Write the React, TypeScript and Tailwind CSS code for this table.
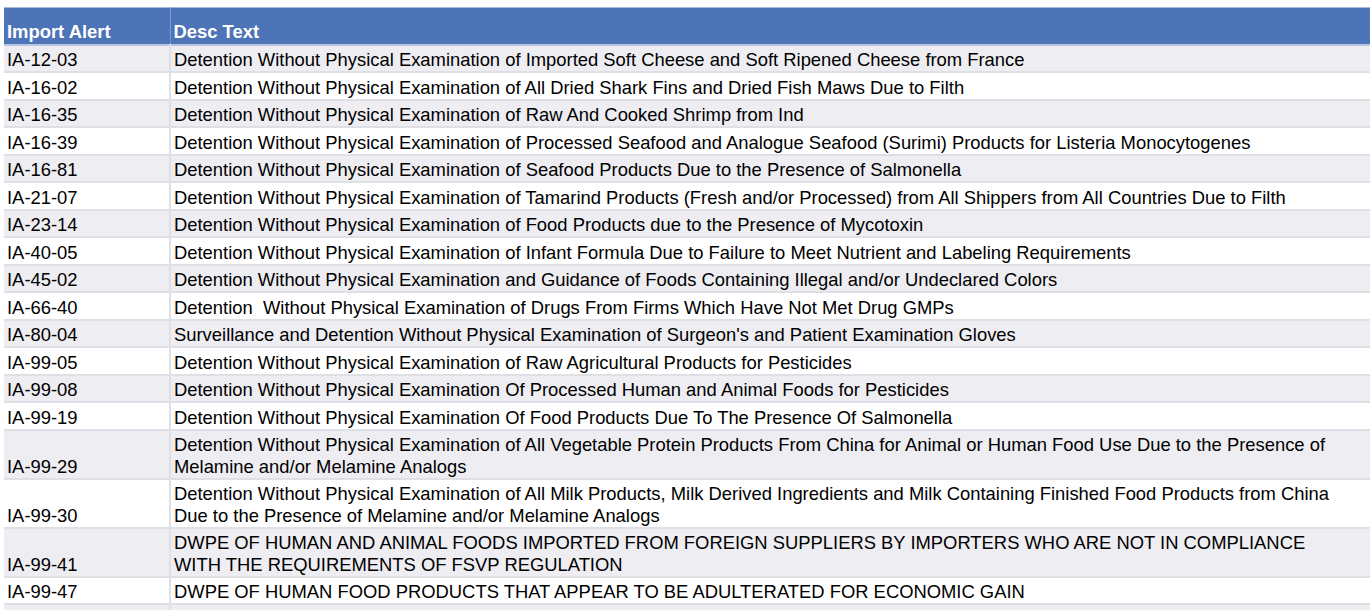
const rows: { id: string; lines: string[] }[] = [
  { id: "IA-12-03", lines: ["Detention Without Physical Examination of Imported Soft Cheese and Soft Ripened Cheese from France"] },
  { id: "IA-16-02", lines: ["Detention Without Physical Examination of All Dried Shark Fins and Dried Fish Maws Due to Filth"] },
  { id: "IA-16-35", lines: ["Detention Without Physical Examination of Raw And Cooked Shrimp from Ind"] },
  { id: "IA-16-39", lines: ["Detention Without Physical Examination of Processed Seafood and Analogue Seafood (Surimi) Products for Listeria Monocytogenes"] },
  { id: "IA-16-81", lines: ["Detention Without Physical Examination of Seafood Products Due to the Presence of Salmonella"] },
  { id: "IA-21-07", lines: ["Detention Without Physical Examination of Tamarind Products (Fresh and/or Processed) from All Shippers from All Countries Due to Filth"] },
  { id: "IA-23-14", lines: ["Detention Without Physical Examination of Food Products due to the Presence of Mycotoxin"] },
  { id: "IA-40-05", lines: ["Detention Without Physical Examination of Infant Formula Due to Failure to Meet Nutrient and Labeling Requirements"] },
  { id: "IA-45-02", lines: ["Detention Without Physical Examination and Guidance of Foods Containing Illegal and/or Undeclared Colors"] },
  { id: "IA-66-40", lines: ["Detention  Without Physical Examination of Drugs From Firms Which Have Not Met Drug GMPs"] },
  { id: "IA-80-04", lines: ["Surveillance and Detention Without Physical Examination of Surgeon's and Patient Examination Gloves"] },
  { id: "IA-99-05", lines: ["Detention Without Physical Examination of Raw Agricultural Products for Pesticides"] },
  { id: "IA-99-08", lines: ["Detention Without Physical Examination Of Processed Human and Animal Foods for Pesticides"] },
  { id: "IA-99-19", lines: ["Detention Without Physical Examination Of Food Products Due To The Presence Of Salmonella"] },
  {
    id: "IA-99-29",
    lines: [
      "Detention Without Physical Examination of All Vegetable Protein Products From China for Animal or Human Food Use Due to the Presence of",
      "Melamine and/or Melamine Analogs",
    ],
  },
  {
    id: "IA-99-30",
    lines: [
      "Detention Without Physical Examination of All Milk Products, Milk Derived Ingredients and Milk Containing Finished Food Products from China",
      "Due to the Presence of Melamine and/or Melamine Analogs",
    ],
  },
  {
    id: "IA-99-41",
    lines: [
      "DWPE OF HUMAN AND ANIMAL FOODS IMPORTED FROM FOREIGN SUPPLIERS BY IMPORTERS WHO ARE NOT IN COMPLIANCE",
      "WITH THE REQUIREMENTS OF FSVP REGULATION",
    ],
  },
  { id: "IA-99-47", lines: ["DWPE OF HUMAN FOOD PRODUCTS THAT APPEAR TO BE ADULTERATED FOR ECONOMIC GAIN"] },
  { id: "", lines: [""] },
];

export default function App() {
  return (
    <div className="w-[1370px] h-[610px] overflow-hidden bg-white pt-[7px] pl-[4px] font-['Liberation_Sans',Arial,sans-serif] text-[18.4px] text-black">
      <table className="border-collapse table-fixed w-[1380px]">
        <colgroup>
          <col className="w-[166px]" />
          <col />
        </colgroup>
        <thead>
          <tr className="h-[37px] bg-[#4e74b8] border-t border-[#a7b8da] border-b-2 border-b-[#b9c6e2]">
            <th className="text-left align-bottom font-bold text-white pl-[3px] pb-[1px] leading-[22px] border-r border-[#7f9acb]">
              Import Alert
            </th>
            <th className="text-left align-bottom font-bold text-white pl-[3px] pb-[1px] leading-[22px]">Desc Text</th>
          </tr>
        </thead>
        <tbody>
          {rows.map((r, i) => (
            <tr
              key={i}
              className={`${i % 2 === 0 ? "bg-[#eeedf2]" : "bg-white"} ${
                r.lines.length > 1 ? "h-[49px]" : "h-[27.5px]"
              } border-b-2 border-[#dfdfe6]`}
            >
              <td className="align-bottom pl-[3px] pb-0 leading-[22px] whitespace-nowrap border-r-2 border-[#dfdfe6]">
                {r.id}
              </td>
              <td className="align-bottom pl-[3px] pb-0 leading-[22px] whitespace-pre">
                {r.lines.map((l, j) => (
                  <div key={j}>{l}</div>
                ))}
              </td>
            </tr>
          ))}
        </tbody>
      </table>
    </div>
  );
}
